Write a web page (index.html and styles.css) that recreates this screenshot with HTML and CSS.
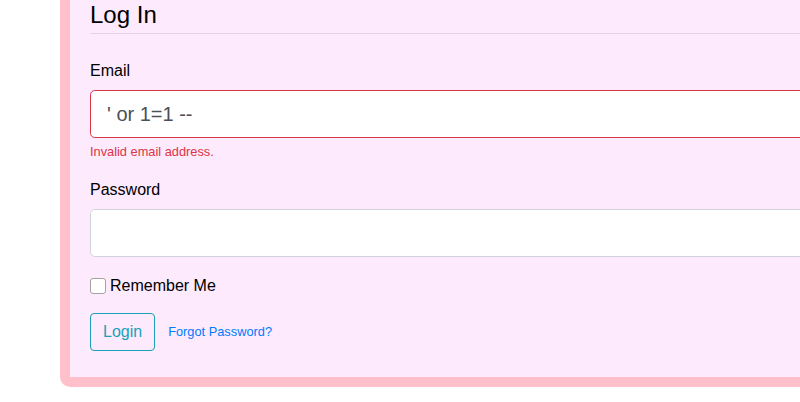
FILE: index.html
```html
<!DOCTYPE html>
<html lang="en">
<head>
<meta charset="utf-8">
<title>Log In</title>
<link rel="stylesheet" href="styles.css">
</head>
<body>
<div class="page">
  <div class="card">
    <h2 class="title">Log In</h2>
    <hr class="rule">
    <form class="form">
      <div class="group">
        <label class="label" for="email">Email</label>
        <input class="control invalid" id="email" type="text" value="' or 1=1 --">
        <div class="feedback">Invalid email address.</div>
      </div>
      <div class="group">
        <label class="label" for="password">Password</label>
        <input class="control" id="password" type="password">
      </div>
      <div class="group check">
        <input class="checkbox" id="remember" type="checkbox">
        <label class="check-label" for="remember">Remember Me</label>
      </div>
      <div class="actions">
        <button class="btn" type="button">Login</button>
        <a class="link" href="#">Forgot Password?</a>
      </div>
    </form>
  </div>
</div>
</body>
</html>
```
FILE: styles.css
```css
html, body {
  margin: 0;
  padding: 0;
  background: #ffffff;
  overflow: hidden;
}
body {
  font-family: "Liberation Sans", Arial, sans-serif;
  font-size: 16px;
  line-height: 24px;
  color: #000;
}
.page {
  padding-left: 60px;
}
.card {
  width: 1000px;
  margin-top: -30px;
  background: #fdeafd;
  border: 10px solid #ffc0cb;
  border-radius: 10px;
  padding: 20px 20px 26px 20px;
}
.title {
  margin: 0;
  font-size: 24px;
  font-weight: 400;
  line-height: 29px;
}
.rule {
  margin: 4px 0 0 0;
  border: 0;
  border-top: 1px solid rgba(0, 0, 0, 0.1);
}
.form {
  margin-top: 24px;
}
.group {
  margin-bottom: 16px;
}
.label {
  display: block;
  padding-top: 1px;
  margin-bottom: 7px;
}
.control {
  display: block;
  box-sizing: border-box;
  width: 100%;
  height: 48px;
  padding: 8px 16px;
  font-family: "Liberation Sans", Arial, sans-serif;
  font-size: 20px;
  line-height: 30px;
  color: #495057;
  background: #fff;
  border: 1px solid #ced4da;
  border-radius: 4.8px;
  outline: none;
}
.control.invalid {
  border-color: #dc3545;
}
.feedback {
  margin-top: 4px;
  font-size: 12.8px;
  line-height: 19px;
  color: #dc3545;
}
.check {
  display: flex;
  align-items: center;
  height: 24px;
  padding-top: 1px;
  margin-bottom: 15px;
}
.checkbox {
  appearance: none;
  -webkit-appearance: none;
  box-sizing: border-box;
  width: 16px;
  height: 16px;
  margin: 0 4px 0 0;
  background: #fff;
  border: 1px solid #a8a0a0;
  border-radius: 3px;
}
.check-label {
  line-height: 24px;
}
.actions {
  display: flex;
  align-items: center;
  gap: 13px;
}
.btn {
  box-sizing: border-box;
  height: 38px;
  padding: 6px 12px;
  font-family: "Liberation Sans", Arial, sans-serif;
  font-size: 16px;
  line-height: 24px;
  color: #17a2b8;
  background: transparent;
  border: 1px solid #17a2b8;
  border-radius: 4px;
}
.link {
  font-size: 12.8px;
  color: #007bff;
  text-decoration: none;
}
```
